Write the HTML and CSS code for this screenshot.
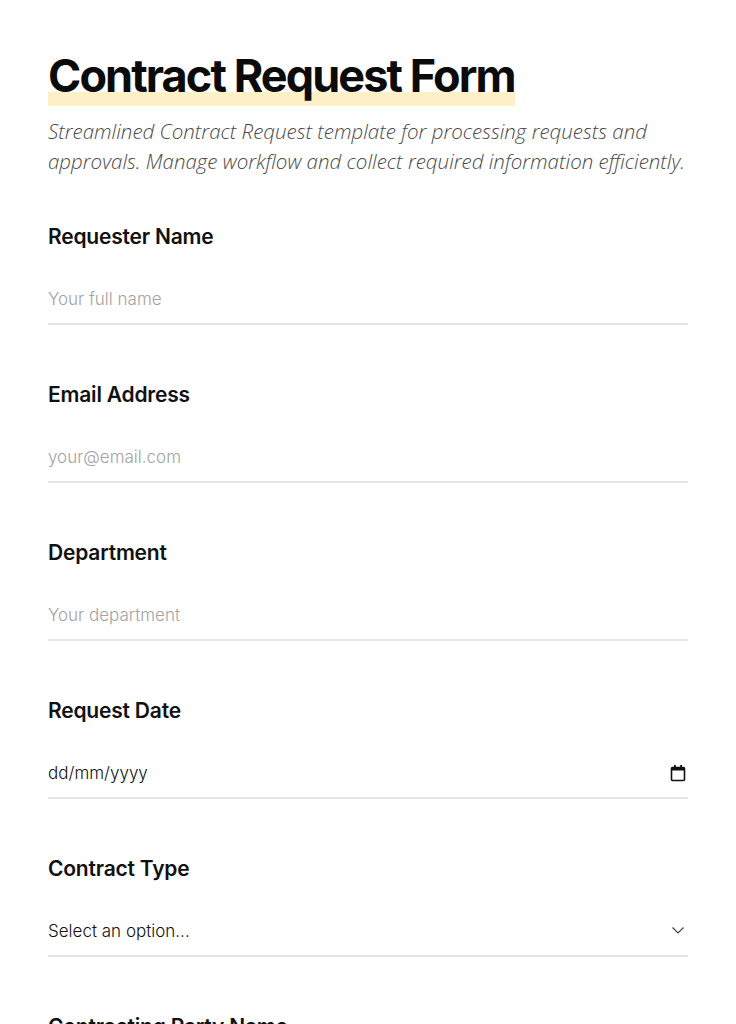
FILE: index.html
```html
<!DOCTYPE html>
<html lang="en">
<head>
<meta charset="utf-8">
<title>Contract Request Form</title>
<link rel="stylesheet" href="styles.css">
</head>
<body>
<main class="page">
  <header class="intro">
    <h1 class="title">Contract Request Form</h1>
    <p class="subtitle">Streamlined Contract Request template for processing requests and approvals. Manage workflow and collect required information efficiently.</p>
  </header>
  <form class="form">
    <div class="field">
      <label class="label" for="name">Requester Name</label>
      <input class="input" id="name" type="text" placeholder="Your full name">
    </div>
    <div class="field">
      <label class="label" for="email">Email Address</label>
      <input class="input" id="email" type="email" placeholder="your@email.com">
    </div>
    <div class="field">
      <label class="label" for="dept">Department</label>
      <input class="input" id="dept" type="text" placeholder="Your department">
    </div>
    <div class="field">
      <label class="label" for="date">Request Date</label>
      <div class="control">
        <input class="input input-date" id="date" type="text" placeholder="dd/mm/yyyy">
        <svg class="control-icon" width="16" height="18" viewBox="0 0 16 18" aria-hidden="true">
          <rect x="1.5" y="3.5" width="13" height="13" rx="1" fill="none" stroke="#111" stroke-width="1.6"/>
          <rect x="1.5" y="3.5" width="13" height="3" fill="#111"/>
          <rect x="4" y="1" width="1.8" height="3.5" fill="#111"/>
          <rect x="10.2" y="1" width="1.8" height="3.5" fill="#111"/>
        </svg>
      </div>
    </div>
    <div class="field">
      <label class="label" for="type">Contract Type</label>
      <div class="control">
        <select class="input select" id="type">
          <option>Select an option...</option>
          <option>Service Agreement</option>
          <option>NDA</option>
        </select>
        <svg class="control-icon chevron" width="14" height="10" viewBox="0 0 14 10" aria-hidden="true">
          <path d="M1.5 2.5 L7 8 L12.5 2.5" fill="none" stroke="#444" stroke-width="1.2"/>
        </svg>
      </div>
    </div>
    <div class="field">
      <label class="label" for="party">Contracting Party Name</label>
      <input class="input" id="party" type="text" placeholder="Party name">
    </div>
  </form>
</main>
</body>
</html>
```

FILE: styles.css
```css
* { box-sizing: border-box; }
html, body { margin: 0; padding: 0; background: #fff; }
body {
  font-family: "Inter", "Noto Sans", sans-serif;
  color: #111;
}
.page {
  padding: 46px 48px 0;
  width: 736px;
}
.intro { margin-bottom: 46px; }
.title {
  display: inline-block;
  margin: 0;
  font-size: 45px;
  font-weight: 700;
  letter-spacing: -1.9px;
  line-height: 60px;
  color: #0b0b0b;
  background: linear-gradient(to bottom, transparent 77%, #fdf0c6 77%);
}
.subtitle {
  margin: 10px 0 0;
  font-family: "Open Sans", "Noto Sans", sans-serif;
  font-style: italic;
  font-weight: 300;
  font-size: 20.5px;
  line-height: 30px;
  letter-spacing: 0;
  color: #4a4a4a;
}
.form { display: flex; flex-direction: column; }
.field {
  display: flex;
  flex-direction: column;
  gap: 23px;
  margin-bottom: 55px;
}
.label {
  font-size: 21px;
  font-weight: 600;
  line-height: 30px;
  letter-spacing: -0.2px;
  color: #111;
}
.input {
  width: 100%;
  border: none;
  border-bottom: 2px solid #e5e5e5;
  padding: 12px 0;
  font-family: "Inter", "Noto Sans", sans-serif;
  font-size: 17px;
  font-weight: 300;
  line-height: 24px;
  color: #111;
  background: transparent;
  outline: none;
  border-radius: 0;
}
.input::placeholder { color: #a3a3a3; }
.input-date::placeholder { color: #111; }
.control { position: relative; }
.control-icon {
  position: absolute;
  right: 2px;
  top: 15px;
}
.chevron { right: 3px; top: 18px; }
.select {
  appearance: none;
  -webkit-appearance: none;
  color: #111;
}
```
